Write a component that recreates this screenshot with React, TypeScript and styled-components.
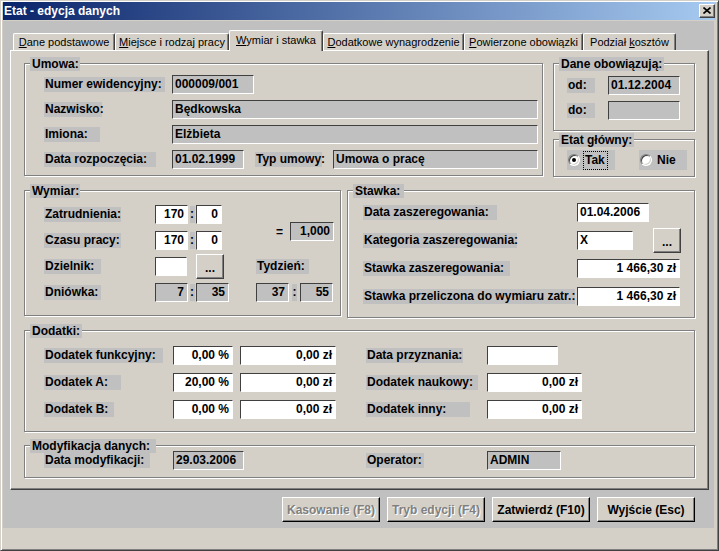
import React from "react";
import styled, { createGlobalStyle, css } from "styled-components";

const FACE = "#d4d0c8";
const GRAY = "#c0c0c0";
const SHADOW = "#808080";
const DARK = "#404040";

const GlobalStyle = createGlobalStyle`
  * { box-sizing: border-box; }
  html, body { margin: 0; padding: 0; background: ${FACE}; }
  body {
    font-family: "Liberation Sans", Arial, sans-serif;
    font-size: 12px;
    color: #000;
  }
`;

const Window = styled.div`
  width: 719px;
  height: 551px;
  background: ${FACE};
  border: 1px solid;
  border-color: ${FACE} ${DARK} ${DARK} ${FACE};
  box-shadow: inset 1px 1px 0 #fff, inset -1px -1px 0 ${SHADOW};
  padding: 1px 2px 22px 2px;
  display: flex;
  flex-direction: column;
`;

const TitleBar = styled.div`
  height: 18px;
  flex: none;
  display: flex;
  align-items: center;
  justify-content: space-between;
  padding: 0 1px 0 1px;
  background: linear-gradient(to right, #0a246a, #a6caf0);
`;

const TitleText = styled.span`
  color: #fff;
  font-weight: bold;
  font-size: 12px;
  white-space: nowrap;
`;

const CloseButton = styled.div`
  width: 16px;
  height: 14px;
  background: ${FACE};
  border: 1px solid;
  border-color: #fff ${DARK} ${DARK} #fff;
  box-shadow: inset -1px -1px 0 ${SHADOW};
  display: flex;
  align-items: center;
  justify-content: center;
  padding-bottom: 1px;
`;

const Client = styled.div`
  margin: 1px 2px 0 0;
  height: 507px;
  background: ${GRAY};
  padding-top: 9px;
  display: flex;
  flex-direction: column;
`;

const TabStrip = styled.div`
  height: 20px;
  padding-left: 10px;
  display: flex;
  align-items: flex-end;
`;

const Tab = styled.div<{ $w: number; $active?: boolean }>`
  width: ${(p) => p.$w}px;
  height: 17px;
  flex: none;
  background: ${FACE};
  border-top: 1px solid #fff;
  border-left: 1px solid #fff;
  border-right: 1px solid ${DARK};
  box-shadow: inset -1px 0 0 ${SHADOW};
  border-radius: 2px 2px 0 0;
  display: flex;
  align-items: center;
  justify-content: center;
  font-size: 11px;
  white-space: nowrap;
  ${(p) =>
    p.$active &&
    css`
      height: 21px;
      margin-bottom: -1px;
      padding-bottom: 3px;
      position: relative;
      z-index: 1;
    `}
`;

const TabLabel = styled.span`
  white-space: pre;
`;

const Accel = styled.span`
  text-decoration: underline;
`;

const Page = styled.div`
  margin-left: 7px;
  width: 699px;
  height: 440px;
  flex: none;
  background: ${FACE};
  border: 1px solid;
  border-color: #fff ${DARK} ${DARK} #fff;
  box-shadow: inset -1px -1px 0 ${SHADOW};
  padding: 12px 0 0 13px;
  display: flex;
  flex-direction: column;
`;

const Row = styled.div<{ $gap: number; $mt?: number }>`
  display: flex;
  align-items: flex-start;
  gap: ${(p) => p.$gap}px;
  margin-top: ${(p) => p.$mt ?? 0}px;
`;

const Column = styled.div<{ $gap: number }>`
  display: flex;
  flex-direction: column;
  gap: ${(p) => p.$gap}px;
`;

const Group = styled.div<{ $w: number; $h: number; $mt?: number }>`
  width: ${(p) => p.$w}px;
  height: ${(p) => p.$h}px;
  margin-top: ${(p) => p.$mt ?? 0}px;
  flex: none;
  border: 1px solid ${SHADOW};
  box-shadow: inset 1px 1px 0 #fff, 1px 1px 0 #fff;
  display: flex;
  flex-direction: column;
`;

const GroupTitle = styled.div<{ $w: number }>`
  width: ${(p) => p.$w}px;
  height: 14px;
  margin: -7px 0 0 5px;
  padding-left: 2px;
  background: ${GRAY};
  font-weight: bold;
  line-height: 14px;
  white-space: nowrap;
`;

const GroupBody = styled.div<{ $pt: number; $pl: number; $mt?: number }>`
  padding: ${(p) => p.$pt}px 0 0 ${(p) => p.$pl}px;
  margin-top: ${(p) => p.$mt ?? 0}px;
`;

const Rows = styled.div<{ $gap: number }>`
  display: flex;
  flex-direction: column;
  gap: ${(p) => p.$gap}px;
`;

const FormRow = styled.div<{ $cols: string }>`
  display: grid;
  grid-template-columns: ${(p) => p.$cols};
  grid-template-rows: 19px;
  align-items: center;
  height: 19px;
`;

const Inline = styled.div<{ $gap: number }>`
  display: flex;
  align-items: center;
  gap: ${(p) => p.$gap}px;
`;

const Label = styled.div<{ $w: number }>`
  width: ${(p) => p.$w}px;
  height: 15px;
  padding-left: 1px;
  background: ${GRAY};
  font-weight: bold;
  line-height: 15px;
  white-space: nowrap;
`;

const Field = styled.div<{ $w: number; $ro?: boolean; $right?: boolean }>`
  width: ${(p) => p.$w}px;
  height: 19px;
  flex: none;
  background: ${(p) => (p.$ro ? GRAY : "#fff")};
  border: 1px solid;
  border-color: ${DARK} #fff #fff ${DARK};
  padding: 0 3px 0 2px;
  font-weight: bold;
  line-height: 17px;
  text-align: ${(p) => (p.$right ? "right" : "left")};
  white-space: nowrap;
  overflow: hidden;
`;

const Colon = styled.div<{ $w: number }>`
  width: ${(p) => p.$w}px;
  height: 17px;
  display: flex;
  justify-content: center;
  font-weight: bold;
  line-height: 17px;
  justify-self: center;
`;

const ColonMark = styled.span`
  background: ${GRAY};
  width: 5px;
  text-align: center;
`;

const DotsButton = styled.div`
  width: 28px;
  height: 25px;
  flex: none;
  background: ${FACE};
  border: 1px solid;
  border-color: #fff ${DARK} ${DARK} #fff;
  box-shadow: inset -1px -1px 0 ${SHADOW};
  display: flex;
  align-items: center;
  justify-content: center;
  font-weight: bold;
  padding-top: 3px;
`;

const WymiarGrid = styled.div`
  display: grid;
  grid-template-columns: 111px 33px 8px 33px 27px 78px;
  grid-template-rows: repeat(4, 19px);
  row-gap: 7px;
  align-items: center;
  justify-items: start;
`;

const Cell = styled.div<{ $c: string; $r: string; $align?: string; $mt?: number }>`
  grid-column: ${(p) => p.$c};
  grid-row: ${(p) => p.$r};
  align-self: ${(p) => p.$align ?? "center"};
  margin-top: ${(p) => p.$mt ?? 0}px;
  display: flex;
  align-items: center;
`;

const RatioCell = styled(Cell)`
  justify-self: end;
  gap: 7px;
  font-weight: bold;
`;

const RadioItem = styled.div`
  width: 48px;
  height: 20px;
  background: ${GRAY};
  display: flex;
  align-items: center;
  gap: 3px;
  padding-left: 1px;
  font-weight: bold;
`;

const RadioCircle = styled.span`
  width: 12px;
  height: 12px;
  flex: none;
  border-radius: 50%;
  background: #fff;
  border: 1px solid;
  border-color: ${SHADOW} #fff #fff ${SHADOW};
  box-shadow: inset 1px 1px 0 ${DARK}, inset -1px -1px 0 ${FACE};
  display: flex;
  align-items: center;
  justify-content: center;
`;

const RadioDot = styled.span`
  width: 4px;
  height: 4px;
  border-radius: 50%;
  background: #000;
`;

const RadioText = styled.span<{ $focus?: boolean }>`
  height: 19px;
  line-height: 17px;
  padding: 0 2px 0 1px;
  border: 1px dotted ${(p) => (p.$focus ? "#000" : "transparent")};
`;

const ButtonBar = styled.div`
  margin-top: 7px;
  padding-right: 19px;
  display: flex;
  justify-content: flex-end;
  gap: 7px;
`;

const DialogButton = styled.div<{ $disabled?: boolean }>`
  width: 98px;
  height: 25px;
  background: ${FACE};
  border: 1px solid;
  border-color: #fff #000 #000 #fff;
  box-shadow: inset -1px -1px 0 ${SHADOW};
  display: flex;
  align-items: center;
  justify-content: center;
  font-weight: bold;
  white-space: nowrap;
  color: ${(p) => (p.$disabled ? SHADOW : "#000")};
  text-shadow: ${(p) => (p.$disabled ? "1px 1px 0 #fff" : "none")};
`;

const tabs: { w: number; pre: string; key: string; post: string; active?: boolean }[] = [
  { w: 102, pre: "", key: "D", post: "ane podstawowe" },
  { w: 114, pre: "", key: "M", post: "iejsce i rodzaj pracy" },
  { w: 94, pre: "", key: "W", post: "ymiar i stawka", active: true },
  { w: 141, pre: "", key: "D", post: "odatkowe wynagrodzenie" },
  { w: 119, pre: "", key: "P", post: "owierzone obowiązki" },
  { w: 93, pre: "Podział ", key: "k", post: "osztów" },
];

const buttons = [
  { label: "Kasowanie (F8)", disabled: true },
  { label: "Tryb edycji (F4)", disabled: true },
  { label: "Zatwierdź (F10)" },
  { label: "Wyjście (Esc)" },
];

const stawkaRows = [
  { label: "Data zaszeregowania:", lw: 134, value: "01.04.2006", fw: 72, right: false },
  { label: "Kategoria zaszeregowania:", lw: 154, value: "X", fw: 56, right: false, dots: true },
  { label: "Stawka zaszeregowania:", lw: 147, value: "1 466,30 zł", fw: 103, right: true },
  { label: "Stawka przeliczona do wymiaru zatr.:", lw: 212, value: "1 466,30 zł", fw: 103, right: true },
];

const dodatkiRows = [
  { l: "Dodatek funkcyjny:", lw: 119, pct: "0,00 %", zl: "0,00 zł", rl: "Data przyznania:", rlw: 97, rv: "", rfw: 71, rright: false },
  { l: "Dodatek A:", lw: 77, pct: "20,00 %", zl: "0,00 zł", rl: "Dodatek naukowy:", rlw: 112, rv: "0,00 zł", rfw: 95, rright: true },
  { l: "Dodatek B:", lw: 70, pct: "0,00 %", zl: "0,00 zł", rl: "Dodatek inny:", rlw: 104, rv: "0,00 zł", rfw: 95, rright: true },
];

const CloseIcon = () => (
  <svg width="8" height="7" viewBox="0 0 8 7">
    <path d="M0.5 0.5 L7.5 6.5 M7.5 0.5 L0.5 6.5" stroke="#000" strokeWidth="1.6" />
  </svg>
);

export default function App() {
  return (
    <>
      <GlobalStyle />
      <Window>
        <TitleBar>
          <TitleText>Etat - edycja danych</TitleText>
          <CloseButton>
            <CloseIcon />
          </CloseButton>
        </TitleBar>
        <Client>
          <TabStrip>
            {tabs.map((t, i) => (
              <Tab key={i} $w={t.w} $active={t.active}>
                <TabLabel>
                  {t.pre}
                  <Accel>{t.key}</Accel>
                  {t.post}
                </TabLabel>
              </Tab>
            ))}
          </TabStrip>
          <Page>
            <Row $gap={10}>
              <Group $w={519} $h={113}>
                <GroupTitle $w={50}>Umowa:</GroupTitle>
                <GroupBody $pt={4} $pl={19}>
                  <Rows $gap={6}>
                    <FormRow $cols="128px auto">
                      <Label $w={121}>Numer ewidencyjny:</Label>
                      <Field $w={82} $ro>000009/001</Field>
                    </FormRow>
                    <FormRow $cols="128px auto">
                      <Label $w={58}>Nazwisko:</Label>
                      <Field $w={366} $ro>Będkowska</Field>
                    </FormRow>
                    <FormRow $cols="128px auto">
                      <Label $w={56}>Imiona:</Label>
                      <Field $w={366} $ro>Elżbieta</Field>
                    </FormRow>
                    <FormRow $cols="128px auto">
                      <Label $w={112}>Data rozpoczęcia:</Label>
                      <Inline $gap={11}>
                        <Field $w={72} $ro>01.02.1999</Field>
                        <Label $w={67}>Typ umowy:</Label>
                        <Field $w={205} $ro>Umowa o pracę</Field>
                      </Inline>
                    </FormRow>
                  </Rows>
                </GroupBody>
              </Group>
              <Column $gap={8}>
                <Group $w={142} $h={68}>
                  <GroupTitle $w={105}>Dane obowiązują:</GroupTitle>
                  <GroupBody $pt={5} $pl={13}>
                    <Rows $gap={6}>
                      <FormRow $cols="41px auto">
                        <Label $w={28}>od:</Label>
                        <Field $w={72} $ro>01.12.2004</Field>
                      </FormRow>
                      <FormRow $cols="41px auto">
                        <Label $w={28}>do:</Label>
                        <Field $w={72} $ro></Field>
                      </FormRow>
                    </Rows>
                  </GroupBody>
                </Group>
                <Group $w={142} $h={38}>
                  <GroupTitle $w={75}>Etat główny:</GroupTitle>
                  <GroupBody $pt={3} $pl={13}>
                    <Inline $gap={24}>
                      <RadioItem>
                        <RadioCircle>
                          <RadioDot />
                        </RadioCircle>
                        <RadioText $focus>Tak</RadioText>
                      </RadioItem>
                      <RadioItem>
                        <RadioCircle />
                        <RadioText>Nie</RadioText>
                      </RadioItem>
                    </Inline>
                  </GroupBody>
                </Group>
              </Column>
            </Row>

            <Row $gap={6} $mt={13}>
              <Group $w={317} $h={126}>
                <GroupTitle $w={50}>Wymiar:</GroupTitle>
                <GroupBody $pt={7} $pl={19}>
                  <WymiarGrid>
                    <Cell $c="1" $r="1"><Label $w={77}>Zatrudnienia:</Label></Cell>
                    <Cell $c="2" $r="1"><Field $w={33} $right>170</Field></Cell>
                    <Cell $c="3" $r="1"><Colon $w={8}><ColonMark>:</ColonMark></Colon></Cell>
                    <Cell $c="4" $r="1"><Field $w={26} $right>0</Field></Cell>
                    <RatioCell $c="6" $r="1 / span 2" $align="start" $mt={17}>
                      =<Field $w={44} $ro $right>1,000</Field>
                    </RatioCell>

                    <Cell $c="1" $r="2"><Label $w={77}>Czasu pracy:</Label></Cell>
                    <Cell $c="2" $r="2"><Field $w={33} $right>170</Field></Cell>
                    <Cell $c="3" $r="2"><Colon $w={8}><ColonMark>:</ColonMark></Colon></Cell>
                    <Cell $c="4" $r="2"><Field $w={26} $right>0</Field></Cell>

                    <Cell $c="1" $r="3"><Label $w={57}>Dzielnik:</Label></Cell>
                    <Cell $c="2" $r="3"><Field $w={32}></Field></Cell>
                    <Cell $c="4" $r="3"><DotsButton>...</DotsButton></Cell>
                    <Cell $c="6" $r="3"><Label $w={53}>Tydzień:</Label></Cell>

                    <Cell $c="1" $r="4"><Label $w={57}>Dniówka:</Label></Cell>
                    <Cell $c="2" $r="4"><Field $w={33} $ro $right>7</Field></Cell>
                    <Cell $c="3" $r="4"><Colon $w={8}><ColonMark>:</ColonMark></Colon></Cell>
                    <Cell $c="4" $r="4"><Field $w={33} $ro $right>35</Field></Cell>
                    <Cell $c="6" $r="4">
                      <Field $w={33} $ro $right>37</Field>
                      <Colon $w={11}><ColonMark>:</ColonMark></Colon>
                      <Field $w={33} $ro $right>55</Field>
                    </Cell>
                  </WymiarGrid>
                </GroupBody>
              </Group>
              <Group $w={348} $h={128}>
                <GroupTitle $w={51}>Stawka:</GroupTitle>
                <GroupBody $pt={5} $pl={15}>
                  <Rows $gap={9}>
                    {stawkaRows.map((r, i) => (
                      <FormRow key={i} $cols="214px auto">
                        <Label $w={r.lw}>{r.label}</Label>
                        <Inline $gap={20}>
                          <Field $w={r.fw} $right={r.right}>{r.value}</Field>
                          {r.dots && <DotsButton>...</DotsButton>}
                        </Inline>
                      </FormRow>
                    ))}
                  </Rows>
                </GroupBody>
              </Group>
            </Row>

            <Group $w={671} $h={102} $mt={12}>
              <GroupTitle $w={52}>Dodatki:</GroupTitle>
              <GroupBody $pt={8} $pl={19}>
                <Rows $gap={8}>
                  {dodatkiRows.map((r, i) => (
                    <FormRow key={i} $cols="129px 67px 126px 121px auto">
                      <Label $w={r.lw}>{r.l}</Label>
                      <Field $w={60} $right>{r.pct}</Field>
                      <Field $w={96} $right>{r.zl}</Field>
                      <Label $w={r.rlw}>{r.rl}</Label>
                      <Field $w={r.rfw} $right={r.rright}>{r.rv}</Field>
                    </FormRow>
                  ))}
                </Rows>
              </GroupBody>
            </Group>

            <Group $w={671} $h={33} $mt={13}>
              <GroupTitle $w={126}>Modyfikacja danych:</GroupTitle>
              <GroupBody $pt={0} $pl={19} $mt={-2}>
                <FormRow $cols="129px 193px 121px auto">
                  <Label $w={106}>Data modyfikacji:</Label>
                  <Field $w={71} $ro>29.03.2006</Field>
                  <Label $w={58}>Operator:</Label>
                  <Field $w={74} $ro>ADMIN</Field>
                </FormRow>
              </GroupBody>
            </Group>
          </Page>
          <ButtonBar>
            {buttons.map((b) => (
              <DialogButton key={b.label} $disabled={b.disabled}>
                {b.label}
              </DialogButton>
            ))}
          </ButtonBar>
        </Client>
      </Window>
    </>
  );
}
